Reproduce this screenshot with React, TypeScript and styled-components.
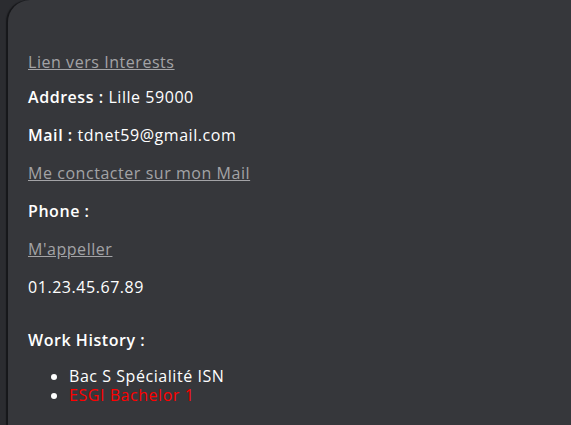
import React from "react";
import styled, { createGlobalStyle } from "styled-components";

const Global = createGlobalStyle`
  html, body { margin: 0; padding: 0; background: #2b2c30; overflow: hidden; }
  body { font-family: "Open Sans", "Noto Sans", sans-serif; }
`;

const Page = styled.div`
  padding: 0 0 0 8px;
  height: 425px;
  box-sizing: border-box;
  overflow: hidden;
`;

const Card = styled.section`
  background: #36373b;
  border-top-left-radius: 22px;
  box-shadow: -2px 0 1px #16171a;
  height: 100%;
  padding: 51px 20px 0 20px;
  box-sizing: border-box;
  color: #ffffff;
  font-size: 16px;
  letter-spacing: 0.55px;
`;

const Para = styled.p<{ $tight?: boolean }>`
  margin: 0 0 ${(p) => (p.$tight ? "13px" : "16px")} 0;
  line-height: 22px;
`;

const Label = styled.span`
  font-weight: 600;
`;

const Link = styled.a`
  color: #a3a3a6;
  text-decoration: underline;
`;

const Heading = styled.p`
  margin: 31px 0 16px 0;
  line-height: 22px;
  font-weight: 600;
`;

const List = styled.ul`
  margin: 0;
  padding-left: 41px;
`;

const Item = styled.li<{ $red?: boolean }>`
  line-height: 19px;
  color: ${(p) => (p.$red ? "#ff0000" : "#ffffff")};
  &::marker { color: #ffffff; }
`;

export default function App() {
  return (
    <>
      <Global />
      <Page>
        <Card>
          <Para $tight><Link href="#">Lien vers Interests</Link></Para>
          <Para><Label>Address :</Label> Lille 59000</Para>
          <Para><Label>Mail :</Label> tdnet59@gmail.com</Para>
          <Para><Link href="#">Me conctacter sur mon Mail</Link></Para>
          <Para><Label>Phone :</Label></Para>
          <Para><Link href="#">M'appeller</Link></Para>
          <Para>01.23.45.67.89</Para>
          <Heading>Work History :</Heading>
          <List>
            <Item>Bac S Spécialité ISN</Item>
            <Item $red>ESGI Bachelor 1</Item>
          </List>
        </Card>
      </Page>
    </>
  );
}
